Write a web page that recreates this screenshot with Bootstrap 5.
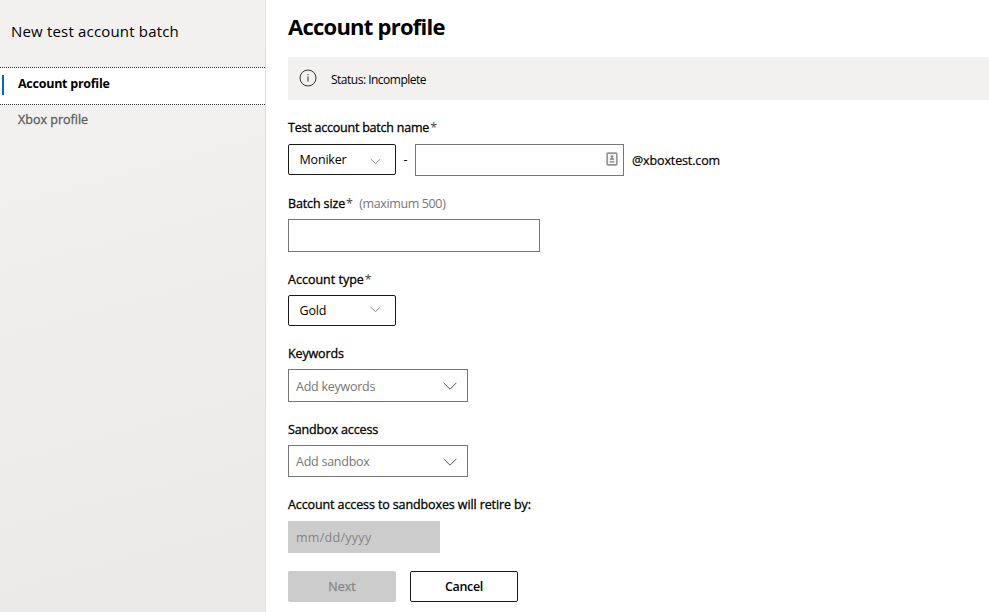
<!DOCTYPE html>
<html lang="en">
<head>
<meta charset="utf-8">
<meta name="viewport" content="width=device-width, initial-scale=1">
<title>New test account batch</title>
<link href="https://cdn.jsdelivr.net/npm/bootstrap@5.3.0/dist/css/bootstrap.min.css" rel="stylesheet">
<style>
body{font-family:"Open Sans","Noto Sans",sans-serif;font-size:12.5px;line-height:18px;color:#000;background:#fff;height:612px;overflow:hidden}
.side{width:266px;height:612px;background:linear-gradient(165deg,#f2f1f0 15%,#ebeae9 90%);border-right:1px solid #e0dfde}
.side-title{font-size:15px;line-height:20px;letter-spacing:.18px;padding:21px 0 0 11px;height:67px}
.side-link{display:block;height:38px;padding:6px 0 0 18px;color:#5c5c5c;text-decoration:none;-webkit-text-stroke:.3px;letter-spacing:.01px}
.side-link.on{background:#fff;color:#000;font-weight:700;-webkit-text-stroke:0;letter-spacing:-.26px;padding-top:7px;border-top:1px dotted #333;border-bottom:1px dotted #333;position:relative}
.side-link.on::before{content:"";position:absolute;left:2px;top:7px;width:2px;height:20px;background:#0067c0}
.content{padding-left:22px}
.title{font-size:22px;line-height:30px;font-weight:700;letter-spacing:-.76px;margin:11px 0 16px}
.status{height:43px;background:#f2f1f0;padding:11px 0 0 11px;margin-bottom:19px}
.status svg{margin-top:.5px}
.status-text{font-size:12px;letter-spacing:-.5px;margin:3px 0 0 14px}
.fld{height:76px}
.fld-short{height:74px}
.fld-mid{height:75px}
.fld-l{display:block;height:24px;white-space:nowrap;-webkit-text-stroke:.3px;letter-spacing:-.13px}
.fld-l.tall{height:25px;letter-spacing:-.11px}
.fld-l.tight{letter-spacing:-.22px}
.fld-l.loose{letter-spacing:0}
.drop{width:108px;height:31px;border:1px solid #1a1a1a;border-radius:2px;padding:0 14px 0 10.5px;letter-spacing:-.18px;font-size:12.5px;background:#fff;color:#000}
.drop-icon{margin-top:3px}
.drop-icon.high{margin-top:-3px}
.dash{width:19px;text-align:center;padding-top:7px}
.box{border:1px solid #767676;background:#fff}
.name-box{width:209px;height:32px;padding:0 5px 2px 0}
.size-box{width:252px;height:33px}
.domain{padding:8px 0 0 8px;letter-spacing:-.13px;-webkit-text-stroke:.2px}
.star{-webkit-text-stroke:0;color:#444;margin-left:1px;letter-spacing:-.3px}
.hint{color:#767676;-webkit-text-stroke:0;letter-spacing:-.38px;margin-left:3.5px}
.combo{width:180px;height:33px;padding:1px 10px 0 7px;color:#767676;letter-spacing:-.25px}
.combo.low{height:32px}
.combo span{padding-top:1px}
.date{width:152px;height:32px;background:#ccc;color:#858585;padding:1px 0 0 8px;letter-spacing:.28px}
.act,.act:disabled{width:108px;height:31px;border-radius:2px;padding:0;font-size:12.5px;line-height:18px}
.act-off,.act-off:disabled{background:#ccc;color:#858585;opacity:1;border:0;-webkit-text-stroke:.25px}
.act-line{border:1px solid #1a1a1a;color:#000;background:#fff;font-weight:600;letter-spacing:-.34px;margin-left:14px}
svg{flex:none;fill:none}
</style>
</head>
<body>
<div class="d-flex">
  <nav class="side flex-shrink-0">
    <div class="side-title">New test account batch</div>
    <a class="side-link on" href="#">Account profile</a>
    <a class="side-link" href="#">Xbox profile</a>
  </nav>
  <main class="content flex-grow-1">
    <h1 class="title">Account profile</h1>
    <div class="status d-flex align-items-start">
      <svg width="18" height="18" viewBox="0 0 18 18" stroke="#333"><circle cx="9" cy="9" r="8"/><path d="M9 7.5v5M9 5v1.3"/></svg>
      <span class="status-text">Status: Incomplete</span>
    </div>
    <div class="fld">
      <label class="fld-l tall tight">Test account batch name<span class="star">*</span></label>
      <div class="d-flex align-items-start">
        <button class="drop d-flex align-items-center justify-content-between" type="button">Moniker<svg class="drop-icon" width="11" height="7" stroke="#8a8a8a"><path d="M.7 1 5.5 5.6 10.3 1"/></svg></button>
        <span class="dash">-</span>
        <div class="box name-box d-flex align-items-center justify-content-end">
          <svg width="12" height="14" viewBox="0 0 11 13"><rect x="1" y="1" width="9" height="11" rx=".8" fill="#f4f4f4" stroke="#949494" stroke-width="1.5"/><circle cx="5.5" cy="4.2" r="1.2" fill="#858585"/><path d="M3.4 7.2c0-2.4 4.2-2.4 4.2 0zM3.4 8.6h4.2v1.1H3.4z" fill="#858585"/></svg>
        </div>
        <span class="domain">@xboxtest.com</span>
      </div>
    </div>
    <div class="fld">
      <label class="fld-l">Batch size<span class="star">*</span> <span class="hint">(maximum 500)</span></label>
      <div class="box size-box"></div>
    </div>
    <div class="fld fld-short">
      <label class="fld-l loose">Account type<span class="star">*</span></label>
      <button class="drop d-flex align-items-center justify-content-between" type="button">Gold<svg class="drop-icon high" width="11" height="7" stroke="#8a8a8a"><path d="M.7 1 5.5 5.6 10.3 1"/></svg></button>
    </div>
    <div class="fld">
      <label class="fld-l">Keywords</label>
      <div class="box combo d-flex align-items-center justify-content-between"><span>Add keywords</span><svg width="14" height="8" stroke="#555"><path d="M.6.8 7 7.2 13.4.8"/></svg></div>
    </div>
    <div class="fld fld-mid">
      <label class="fld-l">Sandbox access</label>
      <div class="box combo low d-flex align-items-center justify-content-between"><span>Add sandbox</span><svg width="14" height="8" stroke="#555"><path d="M.6.8 7 7.2 13.4.8"/></svg></div>
    </div>
    <div class="fld fld-mid">
      <label class="fld-l tall">Account access to sandboxes will retire by:</label>
      <div class="date d-flex align-items-center">mm/dd/yyyy</div>
    </div>
    <div class="d-flex">
      <button class="btn act act-off" type="button" disabled>Next</button>
      <button class="btn act act-line" type="button">Cancel</button>
    </div>
  </main>
</div>
<script src="https://cdn.jsdelivr.net/npm/bootstrap@5.3.0/dist/js/bootstrap.bundle.min.js"></script>
</body>
</html>
